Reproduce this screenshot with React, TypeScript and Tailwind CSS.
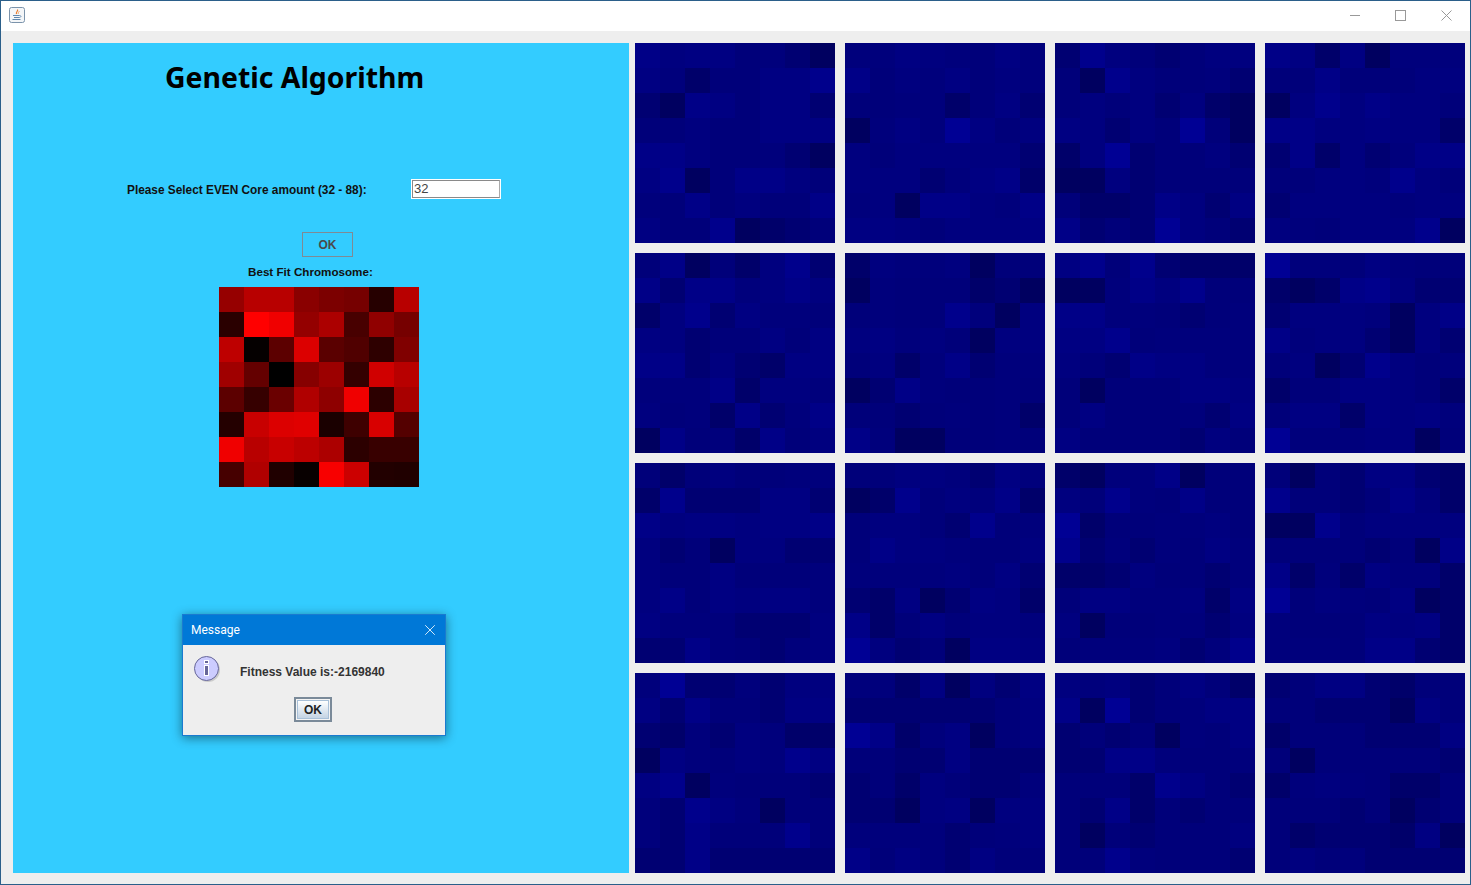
import { X } from "lucide-react";

// blue levels for the 16 small panels, one digit per cell, row by row
const LEVELS = [0x60, 0x6a, 0x72, 0x7a, 0x7c, 0x7f, 0x82, 0x87, 0x8c, 0x94];

const panels = [
  "75663420 64133668 20763662 33533666 77533420 68037753 43735337 63380123",
  "44654364 73546354 33441362 04649635 53555552 55524671 45077547 66535556",
  "28532355 30853342 35352510 65253930 15923352 00523333 31127526 72329532",
  "76160444 33733355 05857553 77556551 27152477 33554853 25555455 54355580",
  "37031582 72774575 15826443 65233636 77252166 44471554 53417247 07341735",
  "15445033 04333120 34338405 56453055 35147244 02743343 33234341 74003343",
  "68382111 00475833 77443234 66834444 53276644 30333665 36333426 63333253",
  "94436433 10178522 25554057 74552052 35028534 13366531 36616564 94445503",
  "31353344 18222662 75665667 52305522 53363334 57365664 64442225 22743245",
  "33554264 01835471 35532834 37554335 44445362 21602651 71363554 95230665",
  "10447033 53843733 91334453 82424364 11253324 36644516 50334425 34445248",
  "30326621 83323741 00835555 33332307 71416441 93543601 43336561 44437721",
  "49224255 62733266 21425411 06435486 68043332 42864033 42733383 22722222",
  "44160526 22222235 97146035 33226222 23153224 22056055 44442345 73642633",
  "54523631 70923466 23230436 22774334 33318632 32713233 30323335 33843332",
  "23662133 33222063 13332226 30333332 14543113 33323023 31222160 35342222",
];

const reds = [
  0x96, 0xb8, 0xb8, 0x8a, 0x7c, 0x76, 0x26, 0xb8,
  0x2a, 0xff, 0xf0, 0x94, 0xac, 0x48, 0x90, 0x76,
  0xbe, 0x05, 0x5c, 0xdc, 0x5a, 0x50, 0x2e, 0x80,
  0xa0, 0x64, 0x00, 0x86, 0x9c, 0x34, 0xd0, 0xb8,
  0x5c, 0x36, 0x6a, 0xb0, 0x8e, 0xf0, 0x2c, 0xa8,
  0x24, 0xc8, 0xdc, 0xe0, 0x1a, 0x3e, 0xd8, 0x54,
  0xf0, 0xb8, 0xc8, 0xbc, 0xac, 0x2c, 0x38, 0x38,
  0x46, 0xb0, 0x20, 0x08, 0xf8, 0xcc, 0x22, 0x20,
];

const Heatmap = ({ colors }: { colors: string[] }) => (
  <div className="grid grid-cols-[repeat(8,25px)] grid-rows-[repeat(8,25px)] w-[200px] h-[200px]">
    {colors.map((c, i) => (
      <div key={i} style={{ backgroundColor: c }} />
    ))}
  </div>
);

const JavaIcon = () => (
  <svg width="16" height="16" viewBox="0 0 16 16">
    <rect x="0.5" y="0.5" width="15" height="15" rx="2" fill="#f4f6f8" stroke="#7b93ab" />
    <path d="M8.5 2.5C9.5 4 6.5 5 7.5 7" fill="none" stroke="#e8782a" strokeWidth="1.2" />
    <path d="M10.5 4C9.8 5 9 5.6 9.2 7" fill="none" stroke="#f0a060" strokeWidth="1" />
    <path d="M4 8.5h6.5M5 10.5h5M3.5 12.5h8" stroke="#5f86ad" strokeWidth="1" />
    <path d="M10.5 8.5c2 0 2 2-.5 2" fill="none" stroke="#5f86ad" strokeWidth="0.9" />
  </svg>
);

const InfoIcon = () => (
  <svg width="28" height="28" viewBox="0 0 28 28">
    <circle cx="15" cy="15" r="12" fill="#a8a8a8" opacity="0.5" />
    <circle cx="13.5" cy="13.5" r="12" fill="#ccccff" stroke="#666699" strokeWidth="1" />
    <rect x="11" y="5" width="5" height="4" fill="#ffffff" />
    <rect x="12" y="6" width="3" height="2" fill="#666699" />
    <rect x="11" y="10" width="5" height="11" fill="#ffffff" />
    <rect x="12" y="11" width="3" height="9" fill="#666699" />
  </svg>
);

export default function App() {
  return (
    <div className="relative w-[1471px] h-[885px] overflow-hidden border border-[#2b5f8a] bg-[#eeeeee] font-['Liberation_Sans',sans-serif]">
      {/* Title bar */}
      <div className="h-[30px] bg-white flex items-center justify-between pl-2 pr-[18px] pb-[2px]">
        <JavaIcon />
        <div className="flex items-center gap-[35px]">
          <div className="w-[10px] h-px bg-[#999999]" />
          <div className="w-[11px] h-[11px] border border-[#999999]" />
          <svg width="11" height="11" viewBox="0 0 11 11">
            <path d="M0.5 0.5l10 10M10.5 0.5l-10 10" stroke="#999999" strokeWidth="1" />
          </svg>
        </div>
      </div>

      <div className="flex gap-[6px] pl-3 pt-3">
        {/* Left panel */}
        <div className="w-[616px] h-[830px] bg-[#33ccff] flex flex-col">
          <h1 className="mt-[14px] ml-[152px] h-[40px] leading-[40px] text-[28.4px] font-bold text-black font-['Noto_Sans',sans-serif] whitespace-nowrap">
            Genetic Algorithm
          </h1>
          <div className="mt-[82px] ml-[114px] flex items-center h-5">
            <span className="w-[284px] mt-[3px] text-[11.85px] font-bold text-[#111111] whitespace-nowrap">
              Please Select EVEN Core amount (32 - 88):
            </span>
            <div className="w-[90px] h-5 bg-white border border-white">
              <div className="h-full border border-[#8a8a8a] border-r-[#aaaaaa] pl-px text-[13px] leading-[16px] text-[#444444]">
                32
              </div>
            </div>
          </div>
          <div className="mt-[33px] ml-[289px] w-[51px] h-[25px] border border-[#7f8a93] flex items-center justify-center text-xs font-bold text-[#4a4a4a]">
            OK
          </div>
          <div className="mt-2 ml-[235px] h-[14px] leading-[14px] text-[11.65px] font-bold text-[#111111] whitespace-nowrap">
            Best Fit Chromosome:
          </div>
          <div className="mt-2 ml-[206px]">
            <Heatmap colors={reds.map((r) => `rgb(${r},0,0)`)} />
          </div>
        </div>

        {/* Grid of small panels */}
        <div className="grid grid-cols-[repeat(4,200px)] gap-[10px]">
          {panels.map((p, i) => (
            <Heatmap
              key={i}
              colors={p
                .replace(/ /g, "")
                .split("")
                .map((d) => `rgb(0,0,${LEVELS[Number(d)]})`)}
            />
          ))}
        </div>
      </div>

      {/* Message dialog */}
      <div className="absolute left-[181px] top-[613px] w-[264px] h-[122px] bg-[#eeeeee] border border-[#1a7ad0] shadow-[0_2px_10px_rgba(0,0,0,0.45)] flex flex-col">
        <div className="h-[30px] bg-[#0078d7] flex items-center justify-between pl-2 pr-[6px] text-white text-xs font-['Roboto',sans-serif]">
          <span>Message</span>
          <X size={18} strokeWidth={1.1} />
        </div>
        <div className="flex items-start pl-[10px] pt-[10px]">
          <InfoIcon />
          <span className="ml-[19px] mt-[9px] text-xs font-bold text-[#333333] whitespace-nowrap">
            Fitness Value is:-2169840
          </span>
        </div>
        <div className="mt-[14px] ml-[111px] w-[38px] h-[25px] border-2 border-[#7a8a99] p-px bg-[#f4f4f4]">
          <div className="w-full h-full border border-[#a8c0d8] bg-gradient-to-b from-white to-[#c4d4e4] flex items-center justify-center text-xs font-bold text-[#222222]">
            OK
          </div>
        </div>
      </div>
    </div>
  );
}
